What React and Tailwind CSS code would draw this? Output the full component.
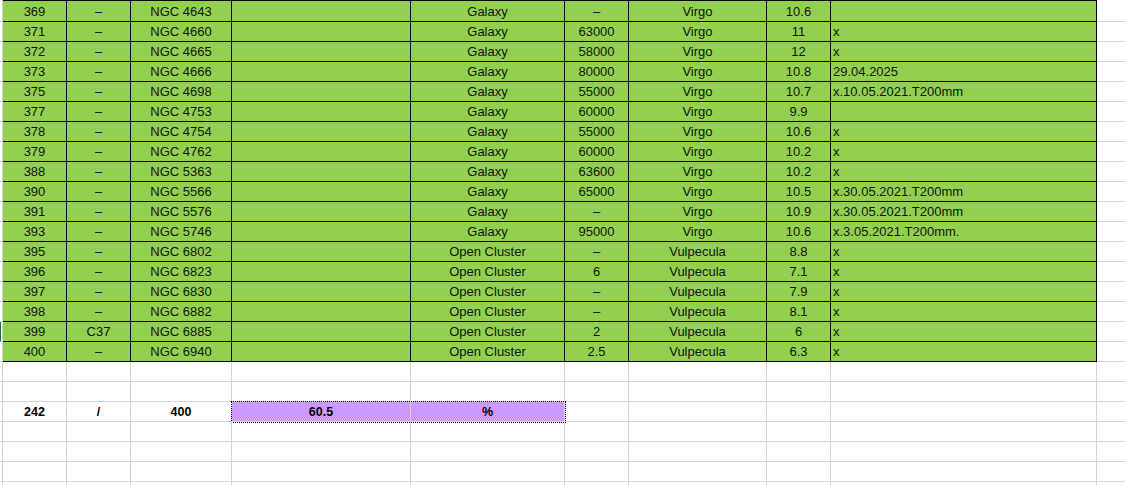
const rows = [
  ["369", "–", "NGC 4643", "Galaxy", "–", "Virgo", "10.6", ""],
  ["371", "–", "NGC 4660", "Galaxy", "63000", "Virgo", "11", "x"],
  ["372", "–", "NGC 4665", "Galaxy", "58000", "Virgo", "12", "x"],
  ["373", "–", "NGC 4666", "Galaxy", "80000", "Virgo", "10.8", "29.04.2025"],
  ["375", "–", "NGC 4698", "Galaxy", "55000", "Virgo", "10.7", "x.10.05.2021.T200mm"],
  ["377", "–", "NGC 4753", "Galaxy", "60000", "Virgo", "9.9", ""],
  ["378", "–", "NGC 4754", "Galaxy", "55000", "Virgo", "10.6", "x"],
  ["379", "–", "NGC 4762", "Galaxy", "60000", "Virgo", "10.2", "x"],
  ["388", "–", "NGC 5363", "Galaxy", "63600", "Virgo", "10.2", "x"],
  ["390", "–", "NGC 5566", "Galaxy", "65000", "Virgo", "10.5", "x.30.05.2021.T200mm"],
  ["391", "–", "NGC 5576", "Galaxy", "–", "Virgo", "10.9", "x.30.05.2021.T200mm"],
  ["393", "–", "NGC 5746", "Galaxy", "95000", "Virgo", "10.6", "x.3.05.2021.T200mm."],
  ["395", "–", "NGC 6802", "Open Cluster", "–", "Vulpecula", "8.8", "x"],
  ["396", "–", "NGC 6823", "Open Cluster", "6", "Vulpecula", "7.1", "x"],
  ["397", "–", "NGC 6830", "Open Cluster", "–", "Vulpecula", "7.9", "x"],
  ["398", "–", "NGC 6882", "Open Cluster", "–", "Vulpecula", "8.1", "x"],
  ["399", "C37", "NGC 6885", "Open Cluster", "2", "Vulpecula", "6", "x"],
  ["400", "–", "NGC 6940", "Open Cluster", "2.5", "Vulpecula", "6.3", "x"],
];

// columns A..H, D is the blank one
const widths = ["w-[64px]", "w-[64px]", "w-[101px]", "w-[179px]", "w-[154px]", "w-[64px]", "w-[138px]", "w-[64px]"];

function Lead({ marked }) {
  return (
    <div
      className={`w-[3px] h-full shrink-0 border-r border-b border-[#d4d4d4] ${marked ? "border-l border-l-[#217346]" : ""}`}
    />
  );
}

function Tail() {
  return <div className="flex-1 h-full border-b border-[#d4d4d4]" />;
}

function GreenRow({ r, first }) {
  const cells = [r[0], r[1], r[2], "", r[3], r[4], r[5], r[6]];
  const top = first ? "border-t pt-[1px]" : "";
  return (
    <div className={`flex ${first ? "h-[22px]" : "h-[20px]"}`}>
      <Lead marked={r[0] === "399"} />
      {cells.map((v, j) => (
        <div
          key={j}
          className={`${widths[j]} h-full shrink-0 bg-[#92d050] border-r border-b ${top} border-black text-center leading-[19px]`}
        >
          {v}
        </div>
      ))}
      <div className={`w-[266px] h-full shrink-0 bg-[#92d050] border-r border-b ${top} border-black pl-[2px] leading-[19px] whitespace-nowrap`}>
        {r[7]}
      </div>
      <Tail />
    </div>
  );
}

function EmptyRow({ children }) {
  return (
    <div className="flex h-[20px]">
      <Lead />
      {children ||
        widths.map((w, j) => (
          <div key={j} className={`${w} h-full shrink-0 border-r border-b border-[#d4d4d4]`} />
        ))}
      {!children && <div className="w-[266px] h-full shrink-0 border-r border-b border-[#d4d4d4]" />}
      <Tail />
    </div>
  );
}

const boldCell = "h-full shrink-0 border-r border-b border-[#d4d4d4] text-center font-bold text-black leading-[20px] text-[12.5px]";

export default function App() {
  return (
    <div
      className="w-[1125px] h-[485px] overflow-hidden bg-white text-[13px] text-[#141414]"
      style={{ fontFamily: '"Liberation Sans", Arial, sans-serif' }}
    >
      {rows.map((r, i) => (
        <GreenRow key={i} r={r} first={i === 0} />
      ))}
      <EmptyRow />
      <EmptyRow />
      <EmptyRow>
        <div className={`w-[64px] ${boldCell}`}>242</div>
        <div className={`w-[64px] ${boldCell}`}>/</div>
        <div className={`w-[101px] ${boldCell}`}>400</div>
        <div className="flex w-[333px] h-full shrink-0 outline outline-dotted outline-black">
          <div className={`w-[179px] bg-[#cc99ff] ${boldCell}`}>60.5</div>
          <div className={`w-[154px] bg-[#cc99ff] ${boldCell}`}>%</div>
        </div>
        <div className="w-[64px] h-full shrink-0 border-r border-b border-[#d4d4d4]" />
        <div className="w-[138px] h-full shrink-0 border-r border-b border-[#d4d4d4]" />
        <div className="w-[64px] h-full shrink-0 border-r border-b border-[#d4d4d4]" />
        <div className="w-[266px] h-full shrink-0 border-r border-b border-[#d4d4d4]" />
      </EmptyRow>
      <EmptyRow />
      <EmptyRow />
      <EmptyRow />
      <EmptyRow />
    </div>
  );
}
